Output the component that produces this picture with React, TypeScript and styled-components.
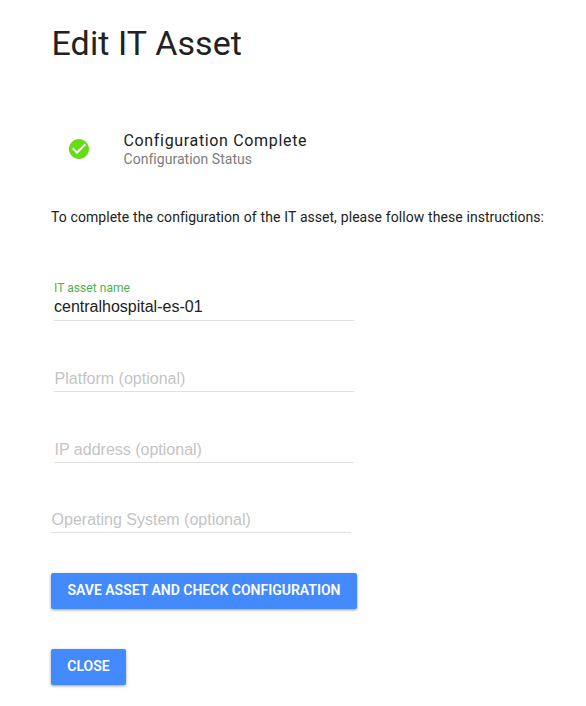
import React from "react";
import styled, { createGlobalStyle } from "styled-components";

const GlobalStyle = createGlobalStyle`
  * { box-sizing: border-box; }
  body { margin: 0; background: #fff; font-family: Roboto, sans-serif; color: #212121; }
`;
const Page = styled.main`
  width: 586px;
  height: 706px;
  padding: 23px 0 0 51px;
  display: flex;
  flex-direction: column;
  align-items: flex-start;
  overflow: hidden;
`;
const Title = styled.h1`
  margin: 0;
  padding-left: 0.5px;
  font-size: 34px;
  line-height: 40px;
  font-weight: 400;
  letter-spacing: 0.1px;
  white-space: nowrap;
`;
const Status = styled.section`
  display: flex;
  align-items: center;
  height: 40px;
  margin-top: 66px;
  padding-left: 16px;
`;
const StatusIcon = styled.svg`
  width: 24px;
  height: 24px;
  margin-right: 32.5px;
  fill: #64dd17;
`;
const StatusTitle = styled.div`
  padding-top: 1px;
  font-size: 16px;
  line-height: 20px;
  letter-spacing: 0.66px;
`;
const StatusCaption = styled.div`
  font-size: 14px;
  line-height: 17px;
  letter-spacing: 0.03px;
  color: #7c7c7c;
`;
const Intro = styled.p`
  margin: 38px 0 0;
  font-size: 14px;
  line-height: 20px;
  letter-spacing: 0.03px;
  word-spacing: 0.4px;
  white-space: nowrap;
`;
const Field = styled.label<{ $top: number; $left?: number }>`
  display: flex;
  flex-direction: column;
  width: 300px;
  margin: ${(p) => p.$top}px 0 0 ${(p) => p.$left ?? 3}px;
  border-bottom: 1px solid #e0e0e0;
`;
const FieldLabel = styled.span`
  font-size: 12px;
  line-height: 16px;
  letter-spacing: 0.06px;
  color: #4caf50;
`;
const Input = styled.input`
  width: 100%;
  height: 24px;
  padding: 0;
  border: 0;
  outline: 0;
  background: transparent;
  color: #212121;
  font: 16px/24px "Liberation Sans", Arial, sans-serif;
  &:not(:placeholder-shown) { padding-bottom: 2px; }
  &::placeholder { color: #c4c4c4; opacity: 1; text-indent: 0.6px; }
`;
const Button = styled.button<{ $top: number; $width: number }>`
  width: ${(p) => p.$width}px;
  height: 36px;
  margin-top: ${(p) => p.$top}px;
  padding: 0 0 2px;
  border: 0;
  border-radius: 2px;
  background: #448aff;
  color: #fff;
  font: 600 14px/34px Roboto, sans-serif;
  text-transform: uppercase;
  white-space: nowrap;
  box-shadow: 0 1px 3px rgba(0, 0, 0, 0.4);
`;

export default function App() {
  return (
    <Page>
      <GlobalStyle />
      <Title>Edit IT Asset</Title>
      <Status>
        <StatusIcon viewBox="0 0 24 24">
          <path d="M12 2C6.48 2 2 6.48 2 12s4.48 10 10 10 10-4.48 10-10S17.52 2 12 2zm-2 15l-5-5 1.41-1.41L10 14.17l7.59-7.59L19 8l-9 9z" />
        </StatusIcon>
        <div>
          <StatusTitle>Configuration Complete</StatusTitle>
          <StatusCaption>Configuration Status</StatusCaption>
        </div>
      </Status>
      <Intro>To complete the configuration of the IT asset, please follow these instructions:</Intro>
      <Field $top={53}>
        <FieldLabel>IT asset name</FieldLabel>
        <Input placeholder=" " defaultValue="centralhospital-es-01" />
      </Field>
      <Field $top={46}><Input placeholder="Platform (optional)" /></Field>
      <Field $top={46}><Input placeholder="IP address (optional)" /></Field>
      <Field $top={45} $left={0}><Input placeholder="Operating System (optional)" /></Field>
      <Button $top={40} $width={306}>Save asset and check configuration</Button>
      <Button $top={40} $width={75}>Close</Button>
    </Page>
  );
}
